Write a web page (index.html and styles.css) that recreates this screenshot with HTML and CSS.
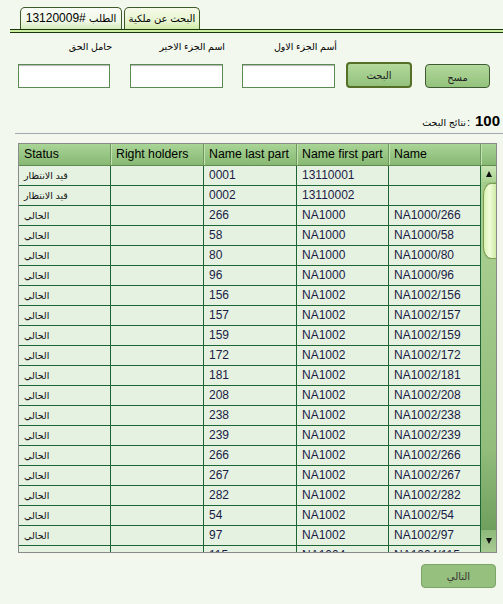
FILE: index.html
```html
<!DOCTYPE html>
<html>
<head>
<meta charset="utf-8">
<link rel="stylesheet" href="styles.css">
</head>
<body>
<div class="tabs">
  <div class="tab t1" dir="ltr">13120009# <span class="tab-ar">الطلب</span></div>
  <div class="tab t2 active">البحث عن ملكية</div>
</div>
<div class="tabline"></div>

<div class="search" dir="rtl">
  <button class="btn clear">مسح</button>
  <button class="btn go">البحث</button>
  <div class="field f1"><span class="lbl">أسم الجزء الاول</span><input class="inp" type="text"></div>
  <div class="field f2"><span class="lbl">اسم الجزء الاخير</span><input class="inp" type="text"></div>
  <div class="field f3"><span class="lbl">حامل الحق</span><input class="inp" type="text"></div>
</div>

<div class="results"><span class="ar">نتائج البحث</span><span class="colon">:</span><b class="count">100</b></div>
<div class="sep"></div>

<div class="grid">
  <div class="ghead">
    <div class="hc c1">Status</div>
    <div class="hc c2">Right holders</div>
    <div class="hc c3">Name last part</div>
    <div class="hc c4">Name first part</div>
    <div class="hc c5">Name</div>
    <div class="hc cs"></div>
  </div>
  <div class="gbody">
    <div class="viewport">
      <table class="rows">
        <tr><td class="st">قيد الانتظار</td><td></td><td>0001</td><td>13110001</td><td></td></tr>
        <tr><td class="st">قيد الانتظار</td><td></td><td>0002</td><td>13110002</td><td></td></tr>
        <tr><td class="st">الحالي</td><td></td><td>266</td><td>NA1000</td><td>NA1000/266</td></tr>
        <tr><td class="st">الحالي</td><td></td><td>58</td><td>NA1000</td><td>NA1000/58</td></tr>
        <tr><td class="st">الحالي</td><td></td><td>80</td><td>NA1000</td><td>NA1000/80</td></tr>
        <tr><td class="st">الحالي</td><td></td><td>96</td><td>NA1000</td><td>NA1000/96</td></tr>
        <tr><td class="st">الحالي</td><td></td><td>156</td><td>NA1002</td><td>NA1002/156</td></tr>
        <tr><td class="st">الحالي</td><td></td><td>157</td><td>NA1002</td><td>NA1002/157</td></tr>
        <tr><td class="st">الحالي</td><td></td><td>159</td><td>NA1002</td><td>NA1002/159</td></tr>
        <tr><td class="st">الحالي</td><td></td><td>172</td><td>NA1002</td><td>NA1002/172</td></tr>
        <tr><td class="st">الحالي</td><td></td><td>181</td><td>NA1002</td><td>NA1002/181</td></tr>
        <tr><td class="st">الحالي</td><td></td><td>208</td><td>NA1002</td><td>NA1002/208</td></tr>
        <tr><td class="st">الحالي</td><td></td><td>238</td><td>NA1002</td><td>NA1002/238</td></tr>
        <tr><td class="st">الحالي</td><td></td><td>239</td><td>NA1002</td><td>NA1002/239</td></tr>
        <tr><td class="st">الحالي</td><td></td><td>266</td><td>NA1002</td><td>NA1002/266</td></tr>
        <tr><td class="st">الحالي</td><td></td><td>267</td><td>NA1002</td><td>NA1002/267</td></tr>
        <tr><td class="st">الحالي</td><td></td><td>282</td><td>NA1002</td><td>NA1002/282</td></tr>
        <tr><td class="st">الحالي</td><td></td><td>54</td><td>NA1002</td><td>NA1002/54</td></tr>
        <tr><td class="st">الحالي</td><td></td><td>97</td><td>NA1002</td><td>NA1002/97</td></tr>
        <tr><td class="st">الحالي</td><td></td><td>115</td><td>NA1004</td><td>NA1004/115</td></tr>
      </table>
    </div>
    <div class="sb">
      <div class="sb-up"><span class="tri-up"></span></div>
      <div class="sb-thumb"></div>
      <div class="sb-track"></div>
      <div class="sb-down"><span class="tri-down"></span></div>
    </div>
  </div>
</div>

<div class="footer">
  <button class="btn next">التالي</button>
</div>
</body>
</html>
```

FILE: styles.css
```css
html, body {
  margin: 0;
  padding: 0;
}
body {
  width: 503px;
  height: 604px;
  overflow: hidden;
  background: #f3f8ee;
  font-family: "Liberation Sans", "DejaVu Sans", sans-serif;
  color: #000;
}

/* tabs */
.tabs {
  display: flex;
  gap: 2px;
  padding: 7px 0 0 20px;
  height: 22px;
}
.tab {
  box-sizing: border-box;
  height: 22px;
  border: 1px solid #3d5a28;
  border-bottom: none;
  border-radius: 5px 5px 0 0;
  background: linear-gradient(#fbfdf8, #eef7e6 65%, #d3ebb8);
  font-size: 12px;
  line-height: 21px;
  text-align: center;
  white-space: nowrap;
}
.t1 { width: 102px; }
.tab-ar { font-size: 10px; }
.t2 {
  width: 76px;
  font-size: 10px;
  background: linear-gradient(#f6fbe8, #e6f4cf 65%, #d0eaa8);
}
.tabline {
  margin-left: 10px;
  height: 2px;
  border-top: 1px solid #1b360c;
  border-bottom: 1px solid #1b360c;
  background: #cdeea0;
}

/* search form */
.search {
  display: flex;
  align-items: flex-end;
  padding: 7px 13px 0 0;
}
.field {
  display: flex;
  flex-direction: column;
  align-items: flex-start;
}
.lbl {
  font-size: 9.5px;
  line-height: 14px;
  height: 14px;
  margin: 0 -2px 10px 0;
  white-space: nowrap;
}
.inp {
  box-sizing: border-box;
  height: 24px;
  margin: 0;
  padding: 0 3px;
  border: 1px solid #5a8a52;
  background: #fff;
  box-shadow: inset 0 2px 1px -1px #b4b4b4;
  outline: none;
}
.f1 { width: 93px; margin-right: 11px; }
.f2 { width: 93px; margin-right: 19px; }
.f3 { width: 92px; margin-right: 20px; }
.f1 .inp, .f2 .inp { width: 93px; }
.f3 .inp { width: 92px; }

.btn {
  box-sizing: border-box;
  margin: 0;
  padding: 0;
  font-family: "Liberation Sans", "DejaVu Sans", sans-serif;
  font-size: 10px;
  color: #222;
  border-radius: 4px;
  background: linear-gradient(#b3d99c, #93c27c);
  cursor: pointer;
}
.clear {
  width: 65px;
  height: 24px;
  border: 1px solid #3f5a33;
  padding-top: 3px;
}
.go {
  width: 66px;
  height: 26px;
  margin-right: 13px;
  border: 2px solid #556f28;
}

/* results */
.results {
  display: flex;
  justify-content: flex-end;
  align-items: baseline;
  margin-top: 25px;
  padding-right: 3px;
  height: 16px;
  line-height: 16px;
}
.results .ar {
  font-size: 9.5px;
}
.results .colon {
  font-size: 11px;
  margin: 0 5px 0 1px;
}
.results .count {
  font-size: 15px;
}
.sep {
  margin: 4px 0 0 15px;
  height: 1px;
  background: #a4a4b2;
}

/* grid */
.grid {
  box-sizing: border-box;
  width: 479px;
  margin: 9px 0 0 18px;
  border: 1px solid #8a8a8a;
}
.ghead {
  display: flex;
  height: 22px;
  box-sizing: border-box;
  border-bottom: 1px solid #5f8a50;
  background: linear-gradient(#a9d596, #87b873);
}
.hc {
  box-sizing: border-box;
  height: 21px;
  line-height: 21px;
  padding-left: 5px;
  font-size: 12.3px;
  color: #000;
  border-right: 1px solid #6d9a5c;
  box-shadow: inset 1px 0 #c3e2b2;
  white-space: nowrap;
}
.c1 { width: 92px; box-shadow: none; }
.c2 { width: 93px; }
.c3 { width: 93px; }
.c4 { width: 92px; }
.c5 { width: 92px; }
.cs { flex: 1; border-right: none; }

.gbody {
  display: flex;
  height: 386px;
}
.viewport {
  width: 462px;
  height: 386px;
  overflow: hidden;
}
.rows {
  table-layout: fixed;
  width: 462px;
  border-collapse: separate;
  border-spacing: 0;
}
.rows td {
  box-sizing: border-box;
  height: 20px;
  padding: 0 0 0 5px;
  border-right: 1px solid #1d6534;
  border-bottom: 1px solid #1d6534;
  background: #e5f2e2;
  font-size: 12px;
  line-height: 19px;
  color: #1b1b45;
  white-space: nowrap;
  overflow: hidden;
}
.rows td:nth-child(1) { width: 92px; }
.rows td:nth-child(2) { width: 93px; }
.rows td:nth-child(3) { width: 93px; }
.rows td:nth-child(4) { width: 92px; }
.rows td:nth-child(5) { width: 92px; }
.rows td.st {
  font-size: 9.5px;
  color: #111;
}

/* scrollbar */
.sb {
  width: 15px;
  display: flex;
  flex-direction: column;
  background: linear-gradient(90deg, #a8cf90, #92bd7b);
}
.sb-up {
  height: 16px;
  display: flex;
  justify-content: center;
  align-items: center;
  background: linear-gradient(#cbe6b6, #aad291);
}
.tri-up {
  width: 0;
  height: 0;
  border-left: 3.5px solid transparent;
  border-right: 3.5px solid transparent;
  border-bottom: 6px solid #111;
}
.sb-thumb {
  box-sizing: border-box;
  height: 76px;
  margin: 1px 0 0 2px;
  border: 1px solid #7c9c52;
  border-right: none;
  border-radius: 8px 0 0 8px / 12px 0 0 12px;
  background: linear-gradient(90deg, #d8f2b0, #f1fcd9 45%, #cfeaa6);
}
.sb-track {
  flex: 1;
  background: linear-gradient(#a6cc8e, #92bd7b 70%, #6f9f5e);
}
.sb-down {
  height: 22px;
  display: flex;
  justify-content: center;
  align-items: center;
  background: linear-gradient(#8db97a, #a8cb93);
}
.tri-down {
  width: 0;
  height: 0;
  border-left: 3.5px solid transparent;
  border-right: 3.5px solid transparent;
  border-top: 6px solid #111;
}

/* footer */
.footer {
  display: flex;
  justify-content: flex-end;
  padding: 11px 7px 0 0;
}
.next {
  width: 75px;
  height: 24px;
  border: 1px solid #7da56a;
  background: #96c07e;
  color: #333;
}
```
